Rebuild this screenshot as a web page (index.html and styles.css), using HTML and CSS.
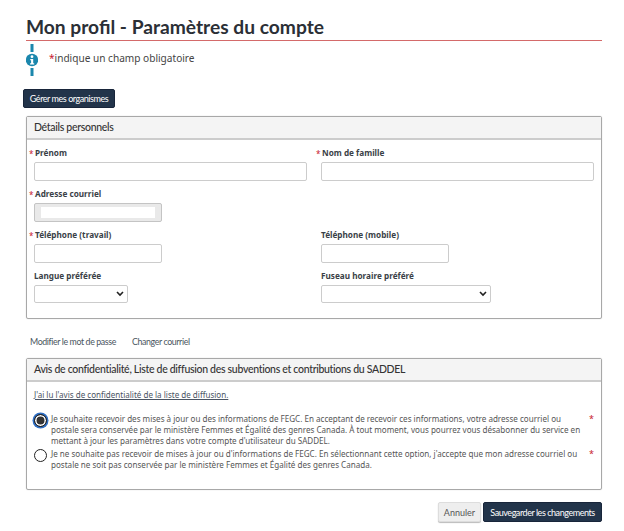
FILE: index.html
```html
<!DOCTYPE html>
<html lang="fr">
<head>
<meta charset="utf-8">
<title>Mon profil</title>
<link rel="stylesheet" href="styles.css">
</head>
<body>
<main class="page">
  <h1 class="title">Mon profil - Paramètres du compte</h1>
  <div class="notice">
    <svg class="info" width="12" height="32" viewBox="0 0 12 32" aria-hidden="true">
      <rect x="4.500" y="0" width="3" height="8" fill="#1b87ad"/>
      <rect x="4.500" y="24" width="3" height="8" fill="#1b87ad"/>
      <circle cx="6" cy="16" r="6.200" fill="#1b87ad"/>
      <circle cx="6" cy="12.700" r="1.400" fill="#fff"/>
      <path d="M4.300 15h2.900v4.300h1v1.300H4.100v-1.300h1v-3h-.8z" fill="#fff"/>
    </svg>
    <p class="notice-text"><span class="req">*</span>indique un champ obligatoire</p>
  </div>
  <button class="btn btn-dark btn-org" type="button">Gérer mes organismes</button>

  <section class="panel panel-details">
    <h2 class="panel-head">Détails personnels</h2>
    <div class="form-body">
      <div class="row">
        <div class="field"><label class="label starred"><span class="req mark">*</span>Prénom</label><input class="input wide" type="text"></div>
        <div class="field"><label class="label starred"><span class="req mark">*</span>Nom de famille</label><input class="input wide" type="text"></div>
      </div>
      <div class="row">
        <div class="field"><label class="label starred"><span class="req mark">*</span>Adresse courriel</label>
          <div class="input short disabled"><span class="disabled-fill"></span></div></div>
      </div>
      <div class="row">
        <div class="field"><label class="label starred"><span class="req mark">*</span>Téléphone (travail)</label><input class="input short" type="text"></div>
        <div class="field"><label class="label">Téléphone (mobile)</label><input class="input short" type="text"></div>
      </div>
      <div class="row">
        <div class="field"><label class="label">Langue préférée</label>
          <div class="select lang"><svg class="chev" width="8" height="6" viewBox="0 0 8 6" aria-hidden="true"><path d="M1 1l3 3 3-3" fill="none" stroke="#222" stroke-width="1.600"/></svg></div></div>
        <div class="field"><label class="label">Fuseau horaire préféré</label>
          <div class="select tz"><svg class="chev" width="8" height="6" viewBox="0 0 8 6" aria-hidden="true"><path d="M1 1l3 3 3-3" fill="none" stroke="#222" stroke-width="1.600"/></svg></div></div>
      </div>
    </div>
  </section>

  <nav class="links">
    <a class="link" href="#">Modifier le mot de passe</a>
    <a class="link" href="#">Changer courriel</a>
  </nav>

  <section class="panel panel-privacy">
    <h2 class="panel-head">Avis de confidentialité, Liste de diffusion des subventions et contributions du SADDEL</h2>
    <div class="privacy-body">
      <a class="read-link" href="#">J'ai lu l'avis de confidentialité de la liste de diffusion.</a>
      <div class="option first">
        <span class="radio checked"></span>
        <p class="option-text">Je souhaite recevoir des mises à jour ou des informations de FEGC. En acceptant de recevoir ces informations, votre adresse courriel ou postale sera conservée par le ministère Femmes et Égalité des genres Canada. À tout moment, vous pourrez vous désabonner du service en mettant à jour les paramètres dans votre compte d'utilisateur du SADDEL.</p>
        <span class="req opt-mark">*</span>
      </div>
      <div class="option second">
        <span class="radio"></span>
        <p class="option-text">Je ne souhaite pas recevoir de mises à jour ou d'informations de FEGC. En sélectionnant cette option, j'accepte que mon adresse courriel ou postale ne soit pas conservée par le ministère Femmes et Égalité des genres Canada.</p>
        <span class="req opt-mark">*</span>
      </div>
    </div>
  </section>

  <div class="actions">
    <button class="btn btn-light" type="button">Annuler</button>
    <button class="btn btn-dark btn-save" type="button">Sauvegarder les changements</button>
  </div>
</main>
</body>
</html>
```
FILE: styles.css
```css
* { box-sizing: border-box; }
html, body { margin: 0; padding: 0; background: #fff; }
body { font-family: "Noto Sans", "Open Sans", sans-serif; color: #333; }
.page { width: 624px; height: 531px; padding: 14px 22px 0 26px; overflow: hidden; }
.title { margin: 0; height: 27px; border-bottom: 1px solid #d46a6a; font-family: "Lato", sans-serif; font-size: 19.200px; line-height: 25px; font-weight: 700; color: #2b2f36; }
.notice { display: flex; align-items: flex-start; gap: 11px; margin-top: 3px; height: 32px; }
.info { flex: none; }
.notice-text { margin: 7px 0 0; font-size: 10.100px; line-height: 14px; color: #444; }
.req { color: #c8202f; }
.btn { font-family: "Lato", sans-serif; border-radius: 2px; font-size: 9px; cursor: pointer; white-space: nowrap; }
.btn-dark { background: #22344a; color: #fff; border: 1px solid #18253a; letter-spacing: -.45px; }
.btn-org { display: block; margin: 13px 0 0 -3px; width: 92px; height: 19px; padding: 0; }
.panel { border: 1px solid #a8a8a8; border-radius: 2px; box-shadow: 0 0 1px #bbb; }
.panel-details { margin-top: 8px; height: 203px; }
.panel-head { margin: 0; background: #f4f4f4; border-bottom: 2px solid #ccc; height: 23px; padding: 0 7px; font-family: "Lato", sans-serif; font-size: 10.500px; line-height: 20px; font-weight: 500; color: #333; letter-spacing: -.3px; }
.form-body { padding: 6px 0 0 7px; }
.row { display: grid; grid-template-columns: 287px 273px; min-height: 41px; }
.field { display: flex; flex-direction: column; align-items: flex-start; position: relative; }
.label { font-size: 8.200px; line-height: 14px; font-weight: 700; color: #3a3f47; height: 16px; }
.starred { padding-left: 1px; }
.mark { position: absolute; left: -5px; top: 1px; font-weight: 400; }
.input { display: block; height: 19px; border: 1px solid #ccc; border-radius: 2px; background: #fff; padding: 0; }
.wide { width: 273px; }
.short { width: 128px; }
.disabled { background: #e9e9e9; padding: 3px 6px; border-color: #c4c4c4; }
.disabled-fill { display: block; height: 100%; background: #fff; }
.select { height: 18px; border: 1px solid #ccc; border-radius: 2px; background: #fff; display: flex; align-items: center; justify-content: flex-end; padding-right: 3px; }
.lang { width: 94px; }
.tz { width: 170px; }
.links { display: flex; gap: 16px; margin: 16px 0 0 4px; height: 23px; }
.link { font-family: "Lato", sans-serif; font-size: 8.800px; line-height: 14px; color: #4a5560; text-decoration: none; letter-spacing: -.38px; }
.panel-privacy { height: 132px; }
.privacy-body { padding: 7px 7px 0; }
.read-link { display: block; font-size: 8.050px; line-height: 12px; color: #4a5463; text-decoration: underline; }
.option { display: flex; align-items: flex-start; }
.option.first { margin-top: 12px; }
.option.second { margin-top: 2px; }
.radio { flex: none; width: 13px; height: 13px; margin: 1px 4px 0 0; border: 1.500px solid #222; border-radius: 50%; background: #fff; }
.radio.checked { background: #333; box-shadow: inset 0 0 0 1.500px #fff, 0 0 0 1.500px #2f6fc4; }
.option-text { flex: none; width: 532px; margin: 0; font-size: 8.070px; line-height: 11px; color: #555; }
.opt-mark { margin-left: 6px; font-size: 9px; line-height: 11px; }
.actions { display: flex; justify-content: flex-end; gap: 2px; margin-top: 12px; }
.btn-light { background: #eee; border: 1px solid #ddd; color: #555; height: 20px; width: 43px; padding: 0; box-shadow: 0 1px 1px #bbb; }
.btn-save { width: 119px; height: 20px; padding: 0; }
```
